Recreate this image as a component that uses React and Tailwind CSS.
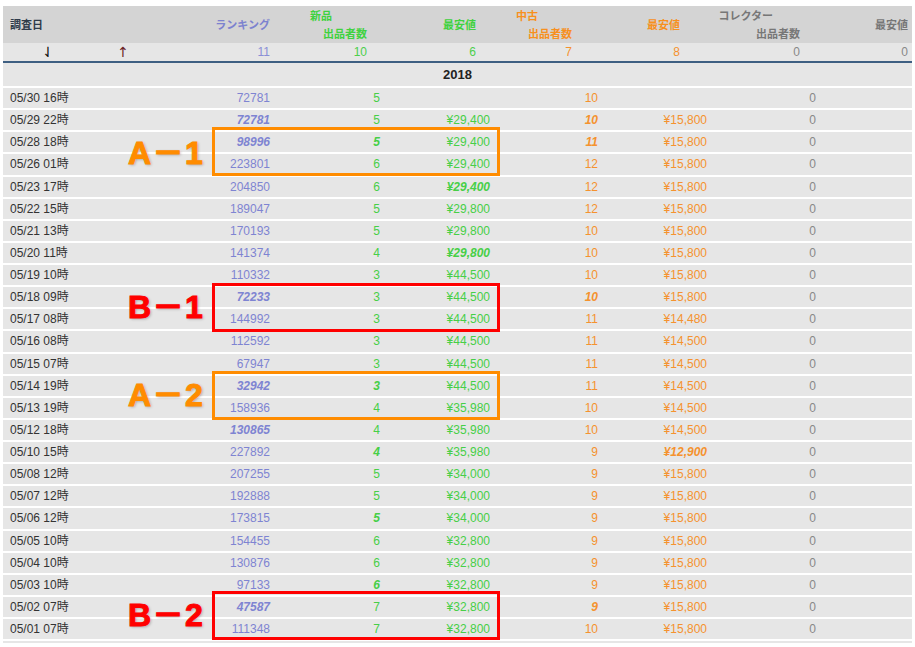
const rows = [
  ["05/30 16時", "72781", "5", "", "10", "", "0"],
  ["05/29 22時", "*72781", "5", "¥29,400", "*10", "¥15,800", "0"],
  ["05/28 18時", "*98996", "*5", "¥29,400", "*11", "¥15,800", "0"],
  ["05/26 01時", "223801", "6", "¥29,400", "12", "¥15,800", "0"],
  ["05/23 17時", "204850", "6", "*¥29,400", "12", "¥15,800", "0"],
  ["05/22 15時", "189047", "5", "¥29,800", "12", "¥15,800", "0"],
  ["05/21 13時", "170193", "5", "¥29,800", "10", "¥15,800", "0"],
  ["05/20 11時", "141374", "4", "*¥29,800", "10", "¥15,800", "0"],
  ["05/19 10時", "110332", "3", "¥44,500", "10", "¥15,800", "0"],
  ["05/18 09時", "*72233", "3", "¥44,500", "*10", "¥15,800", "0"],
  ["05/17 08時", "144992", "3", "¥44,500", "11", "¥14,480", "0"],
  ["05/16 08時", "112592", "3", "¥44,500", "11", "¥14,500", "0"],
  ["05/15 07時", "67947", "3", "¥44,500", "11", "¥14,500", "0"],
  ["05/14 19時", "*32942", "*3", "¥44,500", "11", "¥14,500", "0"],
  ["05/13 19時", "158936", "4", "¥35,980", "10", "¥14,500", "0"],
  ["05/12 18時", "*130865", "4", "¥35,980", "10", "¥14,500", "0"],
  ["05/10 15時", "227892", "*4", "¥35,980", "9", "*¥12,900", "0"],
  ["05/08 12時", "207255", "5", "¥34,000", "9", "¥15,800", "0"],
  ["05/07 12時", "192888", "5", "¥34,000", "9", "¥15,800", "0"],
  ["05/06 12時", "173815", "*5", "¥34,000", "9", "¥15,800", "0"],
  ["05/05 10時", "154455", "6", "¥32,800", "9", "¥15,800", "0"],
  ["05/04 10時", "130876", "6", "¥32,800", "9", "¥15,800", "0"],
  ["05/03 10時", "97133", "*6", "¥32,800", "9", "¥15,800", "0"],
  ["05/02 07時", "*47587", "7", "¥32,800", "*9", "¥15,800", "0"],
  ["05/01 07時", "111348", "7", "¥32,800", "10", "¥15,800", "0"],
];

// emphasised values are marked with a leading "*"
function V({ v }) {
  if (v.startsWith("*")) return <span className="font-bold italic">{v.slice(1)}</span>;
  return v;
}

const marks = [
  { top: "top-[127px]", label: "A－1", box: "border-[#ff8c00]", text: "text-[#ff8c00] [-webkit-text-stroke:1px_#ff8c00]", lt: "top-[137px]" },
  { top: "top-[283px]", label: "B－1", box: "border-[#ff0000]", text: "text-[#ff0000] [-webkit-text-stroke:1px_#ff0000]", lt: "top-[291px]" },
  { top: "top-[371px]", label: "A－2", box: "border-[#ff8c00]", text: "text-[#ff8c00] [-webkit-text-stroke:1px_#ff8c00]", lt: "top-[379px]" },
  { top: "top-[591px]", label: "B－2", box: "border-[#ff0000]", text: "text-[#ff0000] [-webkit-text-stroke:1px_#ff0000]", lt: "top-[599px]" },
];

export default function App() {
  return (
    <div className="relative w-[915px] h-[647px] overflow-hidden bg-white pt-[6px] pl-[3px] font-['Liberation_Sans','Noto_Sans_CJK_JP',sans-serif]">
      <div className="w-[909px]">
        {/* ヘッダー */}
        <div className="flex h-[37px] items-center bg-[#d4d4d4] text-[11px] font-bold leading-[18px]">
          <div className="w-[197px] pl-[7px] text-[#2f3b4a]">調査日</div>
          <div className="w-[70px] text-right text-[#7c82cf]">ランキング</div>
          <div className="w-[97px] flex flex-col items-end text-[#3fd23f]">
            <span className="mr-[35px]">新品</span>
            <span>出品者数</span>
          </div>
          <div className="w-[109px] text-right text-[#3fd23f]">最安値</div>
          <div className="w-[96px] flex flex-col items-end text-[#f7901e]">
            <span className="mr-[34px]">中古</span>
            <span>出品者数</span>
          </div>
          <div className="w-[108px] text-right text-[#f7901e]">最安値</div>
          <div className="w-[120px] flex flex-col items-end text-[#777]">
            <span className="mr-[27px]">コレクター</span>
            <span>出品者数</span>
          </div>
          <div className="w-[108px] text-right text-[#777]">最安値</div>
        </div>

        {/* ソート */}
        <div className="flex h-[18px] items-center bg-[#e6e6e6] text-[12px]">
          <div className="w-[90px] text-center text-[14px] leading-[18px] text-[#111] font-['DejaVu_Sans',sans-serif]">⇃</div>
          <div className="w-[60px] text-center text-[14px] leading-[18px] text-[#6b2424] font-['DejaVu_Sans',sans-serif]">↑</div>
          <div className="w-[47px]" />
          <div className="w-[70px] text-right text-[#8a8fd6]">11</div>
          <div className="w-[97px] text-right text-[#4ccf4c]">10</div>
          <div className="w-[109px] text-right text-[#4ccf4c]">6</div>
          <div className="w-[96px] text-right text-[#f5922e]">7</div>
          <div className="w-[108px] text-right text-[#f5922e]">8</div>
          <div className="w-[120px] text-right text-[#888]">0</div>
          <div className="w-[108px] text-right text-[#888]">0</div>
        </div>
        <div className="h-[2px] bg-[#3e5f82]" />

        <div className="flex h-[23px] items-center justify-center bg-[#e6e6e6] text-[13px] font-bold text-[#222]">2018</div>

        <div className="flex flex-col gap-[2px] pt-[2px]">
          {rows.map((r) => (
            <div key={r[0]} className="flex h-[20.125px] items-center bg-[#e6e6e6] text-[12px]">
              <div className="w-[197px] pl-[7px] text-[#333]">{r[0]}</div>
              <div className="w-[70px] text-right text-[#7e84d2]"><V v={r[1]} /></div>
              <div className="w-[110px] text-right text-[#47cf47]"><V v={r[2]} /></div>
              <div className="w-[110px] text-right text-[#47cf47]"><V v={r[3]} /></div>
              <div className="w-[108px] text-right text-[#f5922e]"><V v={r[4]} /></div>
              <div className="w-[109px] text-right text-[#f5922e]"><V v={r[5]} /></div>
              <div className="w-[109px] text-right text-[#888]">{r[6]}</div>
            </div>
          ))}
          <div className="h-[2px] bg-[#e6e6e6]" />
        </div>
      </div>

      {/* 注釈 */}
      {marks.map((m) => (
        <div key={m.label}>
          <div className={`absolute left-[212px] w-[288px] h-[49px] border-[3px] ${m.top} ${m.box}`} />
          <div className={`absolute left-[128px] text-[32px] leading-[32px] font-bold tracking-[1px] [text-shadow:1px_1px_3px_rgba(0,0,0,0.3)] ${m.lt} ${m.text}`}>
            {m.label}
          </div>
        </div>
      ))}
    </div>
  );
}
